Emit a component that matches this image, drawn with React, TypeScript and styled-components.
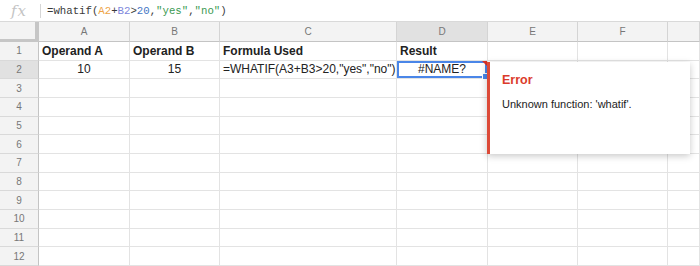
import React from 'react';
import styled, { createGlobalStyle } from 'styled-components';

const GlobalStyle = createGlobalStyle`
	html, body {
		margin: 0;
		padding: 0;
		background: #ffffff;
		font-family: 'Liberation Sans', Arial, sans-serif;
	}
`;

const ROW_H = 18.67;
const COLS = ['A', 'B', 'C', 'D', 'E', 'F', ''];

const Page = styled.div`
	width: 700px;
	height: 266px;
	overflow: hidden;
	background: #ffffff;
`;

const FormulaBar = styled.div`
	display: flex;
	align-items: center;
	height: 22px;
	box-sizing: border-box;
	border-bottom: 1px solid #d9d9d9;
`;

const FxLabel = styled.div`
	width: 40px;
	padding-left: 11px;
	box-sizing: border-box;
	font-family: 'DejaVu Serif', 'Liberation Serif', serif;
	font-style: italic;
	font-size: 15px;
	color: #c4c4c4;
	letter-spacing: 1px;
`;

const Divider = styled.div`
	width: 1px;
	height: 14px;
	background: #d6d6d6;
	margin-right: 6px;
`;

const FormulaText = styled.div`
	font-family: 'Liberation Mono', monospace;
	font-size: 10.7px;
	color: #3a3a3a;
`;

const Token = styled.span<{ $color: string }>`
	color: ${(p) => p.$color};
`;

const Sheet = styled.div`
	position: relative;
	display: grid;
	grid-template-columns: 39px 91px 90px 177px 91px 90px 90px 1fr;
	grid-template-rows: 20px repeat(12, ${ROW_H}px);
`;

const Corner = styled.div`
	background: #f3f3f3;
	border-right: 4px solid #c6c6c6;
	border-bottom: 3px solid #c6c6c6;
	box-sizing: border-box;
`;

const ColHeader = styled.div<{ $selected?: boolean }>`
	display: flex;
	align-items: center;
	justify-content: center;
	background: ${(p) => (p.$selected ? '#e1e1e1' : '#f3f3f3')};
	border-right: 1px solid #d4d4d4;
	border-bottom: 1px solid #c4c4c4;
	box-sizing: border-box;
	font-size: 10px;
	color: #777777;
`;

const RowHeader = styled.div<{ $selected?: boolean }>`
	display: flex;
	align-items: center;
	justify-content: center;
	background: ${(p) => (p.$selected ? '#e1e1e1' : '#f3f3f3')};
	border-right: 1px solid #c4c4c4;
	border-bottom: 1px solid #d9d9d9;
	box-sizing: border-box;
	font-size: 10px;
	color: #777777;
`;

const Cell = styled.div<{ $align?: 'left' | 'center'; $bold?: boolean; $selected?: boolean }>`
	position: relative;
	display: flex;
	align-items: center;
	justify-content: ${(p) => (p.$align === 'center' ? 'center' : 'flex-start')};
	padding: 0 3px;
	border-right: 1px solid #e3e3e3;
	border-bottom: 1px solid #e3e3e3;
	box-sizing: border-box;
	font-size: 12px;
	font-weight: ${(p) => (p.$bold ? 700 : 400)};
	color: #222222;
	white-space: nowrap;
	overflow: visible;
	${(p) =>
		p.$selected &&
		`
		box-shadow: inset 0 0 0 2px #4a86e8;
		&::before {
			content: '';
			position: absolute;
			top: 0;
			right: 0;
			border-top: 5px solid #d93025;
			border-left: 5px solid transparent;
		}
		&::after {
			content: '';
			position: absolute;
			right: -2px;
			bottom: -2px;
			width: 5px;
			height: 5px;
			background: #4a86e8;
			border: 1px solid #ffffff;
		}
	`}
`;

const ErrorPopup = styled.div`
	position: absolute;
	left: 487px;
	top: 40px;
	width: 203px;
	height: 92px;
	box-sizing: border-box;
	background: #ffffff;
	border-left: 3px solid #dc4a38;
	box-shadow: 0 2px 7px rgba(0, 0, 0, 0.22);
	padding: 11px 12px;
`;

const ErrorTitle = styled.div`
	font-size: 12.5px;
	font-weight: 700;
	color: #db3b2b;
	margin-bottom: 11px;
`;

const ErrorMessage = styled.div`
	font-size: 11px;
	color: #222222;
`;

type CellData = { text: string; align?: 'left' | 'center'; bold?: boolean; selected?: boolean };

const data: Record<number, CellData[]> = {
	1: [
		{ text: 'Operand A', bold: true },
		{ text: 'Operand B', bold: true },
		{ text: 'Formula Used', bold: true },
		{ text: 'Result', bold: true },
	],
	2: [
		{ text: '10', align: 'center' },
		{ text: '15', align: 'center' },
		{ text: '=WHATIF(A3+B3>20,"yes","no")' },
		{ text: '#NAME?', align: 'center', selected: true },
	],
};

export default function App() {
	const rows = Array.from({ length: 12 }, (_, i) => i + 1);
	return (
		<Page>
			<GlobalStyle />
			<FormulaBar>
				<FxLabel>fx</FxLabel>
				<Divider />
				<FormulaText>
					=whatif(<Token $color="#eea447">A2</Token>+<Token $color="#7d86dc">B2</Token>&gt;
					<Token $color="#3f74c4">20</Token>,<Token $color="#3b9a52">"yes"</Token>,
					<Token $color="#3b9a52">"no"</Token>)
				</FormulaText>
			</FormulaBar>
			<Sheet>
				<Corner />
				{COLS.map((c, i) => (
					<ColHeader key={i} $selected={c === 'D'}>
						{c}
					</ColHeader>
				))}
				{rows.map((r) => (
					<React.Fragment key={r}>
						<RowHeader $selected={r === 2}>{r}</RowHeader>
						{COLS.map((_, ci) => {
							const cell = data[r]?.[ci];
							return (
								<Cell
									key={ci}
									$align={cell?.align}
									$bold={cell?.bold}
									$selected={cell?.selected}
								>
									{cell?.text}
								</Cell>
							);
						})}
					</React.Fragment>
				))}
				<ErrorPopup>
					<ErrorTitle>Error</ErrorTitle>
					<ErrorMessage>Unknown function: 'whatif'.</ErrorMessage>
				</ErrorPopup>
			</Sheet>
		</Page>
	);
}
